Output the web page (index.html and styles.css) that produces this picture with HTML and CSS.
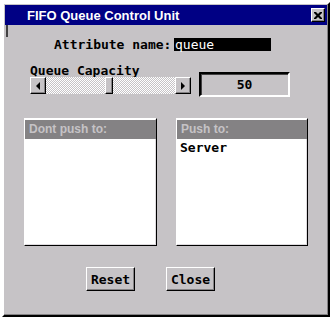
FILE: index.html
```html
<!DOCTYPE html>
<html>
<head>
    <meta charset="utf-8">
    <title>FIFO Queue Control Unit</title>
    <link rel="stylesheet" href="styles.css">
</head>
<body>
    <div class="window">
        <div class="titlebar">
            <span class="title">FIFO Queue Control Unit</span>
            <span class="close-btn">
                <svg width="8" height="7" viewBox="0 0 8 7">
                    <path d="M0 0h2l2 2 2-2h2v1l-2.5 2.5 2.5 2.5v1h-2l-2-2-2 2h-2v-1l2.5-2.5-2.5-2.5z" fill="#000"/>
                </svg>
            </span>
        </div>
        <div class="content">
            <span class="caret"></span>

            <div class="row-attr">
                <span class="attr-label">Attribute name:</span>
                <span class="attr-field">queue</span>
            </div>

            <div class="row-capacity">
                <div class="slider-col">
                    <div class="cap-label">Queue Capacity</div>
                    <div class="scrollbar">
                        <span class="arrow-btn"><span class="tri-left"></span></span>
                        <div class="trough">
                            <span class="thumb"></span>
                        </div>
                        <span class="arrow-btn"><span class="tri-right"></span></span>
                    </div>
                </div>
                <div class="value-box">50</div>
            </div>

            <div class="row-lists">
                <div class="list">
                    <div class="list-head">Dont push to:</div>
                    <div class="list-body"></div>
                </div>
                <div class="list">
                    <div class="list-head">Push to:</div>
                    <div class="list-body">
                        <div class="list-item">Server</div>
                    </div>
                </div>
            </div>

            <div class="row-buttons">
                <button type="button" class="btn">Reset</button>
                <button type="button" class="btn">Close</button>
            </div>
        </div>
    </div>
</body>
</html>
```

FILE: styles.css
```css
body {
  margin: 0;
  padding: 2px;
  background: #fff;
  font-family: "DejaVu Sans Mono", "Liberation Mono", monospace;
}

/* window frame */
.window {
  width: 328px;
  height: 315px;
  box-sizing: border-box;
  border: 2px solid;
  border-color: #fff #000 #000 #fff;
  box-shadow: inset -1px -1px 0 #848284;
  padding: 1px;
  background: #c6c3c6;
  display: flex;
  flex-direction: column;
}

.titlebar {
  height: 20px;
  background: #000084;
  display: flex;
  align-items: center;
  padding-left: 22px;
  padding-right: 2px;
}

.title {
  flex: 1;
  color: #fff;
  font: bold 13px "Liberation Sans", Arial, sans-serif;
}

.close-btn {
  width: 14px;
  height: 14px;
  box-sizing: border-box;
  background: #c6c3c6;
  border: 1px solid;
  border-color: #fff #000 #000 #fff;
  box-shadow: inset -1px -1px 0 #848284;
  display: flex;
  align-items: center;
  justify-content: center;
}

.content {
  flex: 1;
  position: relative;
  font-size: 13px;
  font-weight: bold;
  line-height: 13px;
}

.caret {
  position: absolute;
  left: 1px;
  top: 0;
  width: 2px;
  height: 12px;
  background: #424142;
}

/* attribute row */
.row-attr {
  display: flex;
  margin-top: 13px;
  padding-left: 49px;
  height: 13px;
}

.attr-label {
  width: 120px;
  white-space: nowrap;
}

.attr-field {
  width: 96px;
  background: #000;
  color: #fff;
  font-weight: normal;
  padding-left: 1px;
}

/* capacity row */
.row-capacity {
  display: flex;
  align-items: flex-start;
  margin-top: 13px;
  padding-left: 25px;
  gap: 8px;
}

.slider-col {
  width: 161px;
}

.cap-label {
  height: 13px;
  white-space: nowrap;
}

.scrollbar {
  display: flex;
  height: 17px;
}

.arrow-btn {
  width: 16px;
  height: 17px;
  box-sizing: border-box;
  background: #c6c3c6;
  border: 1px solid;
  border-color: #fff #000 #000 #fff;
  box-shadow: inset -1px -1px 0 #848284;
  display: flex;
  align-items: center;
  justify-content: center;
}

.tri-left {
  border-top: 4px solid transparent;
  border-bottom: 4px solid transparent;
  border-right: 4px solid #000;
}

.tri-right {
  border-top: 4px solid transparent;
  border-bottom: 4px solid transparent;
  border-left: 4px solid #000;
}

.trough {
  flex: 1;
  background-color: #c6c3c6;
  background-image: conic-gradient(#fff 25%, #c6c3c6 0 50%, #fff 0 75%, #c6c3c6 0);
  background-size: 2px 2px;
  padding-left: 59px;
}

.thumb {
  display: block;
  width: 8px;
  height: 17px;
  box-sizing: border-box;
  background: #c6c3c6;
  border: 1px solid;
  border-color: #fff #000 #000 #fff;
  box-shadow: inset -1px -1px 0 #848284;
}

.value-box {
  width: 91px;
  height: 25px;
  margin-top: 8px;
  box-sizing: border-box;
  border: 2px solid;
  border-color: #000 #fff #fff #000;
  box-shadow: inset 1px 1px 0 #424142;
  text-align: center;
  line-height: 21px;
}

/* lists */
.row-lists {
  display: flex;
  gap: 19px;
  margin-top: 21px;
  padding-left: 19px;
}

.list {
  width: 133px;
  height: 128px;
  box-sizing: border-box;
  border: 1px solid;
  border-color: #fff #000 #000 #fff;
  box-shadow: inset -1px -1px 0 #dedbde;
  background: #fff;
}

.list + .list {
  width: 132px;
}

.list-head {
  margin-top: 1px;
  height: 19px;
  background: #848284;
  color: #c6c3c6;
  font: bold 12px "Liberation Sans", Arial, sans-serif;
  line-height: 19px;
  padding-left: 4px;
}

.list-body {
  padding: 2px 3px;
}

.list-item {
  height: 13px;
}

/* buttons */
.row-buttons {
  display: flex;
  gap: 31px;
  margin-top: 21px;
  padding-left: 81px;
}

.btn {
  width: 49px;
  height: 24px;
  margin: 0;
  padding: 0;
  box-sizing: border-box;
  background: #c6c3c6;
  border: 1px solid;
  border-color: #fff #000 #000 #fff;
  box-shadow: inset -1px -1px 0 #848284;
  font: bold 13px "DejaVu Sans Mono", "Liberation Mono", monospace;
  color: #000;
}
```
